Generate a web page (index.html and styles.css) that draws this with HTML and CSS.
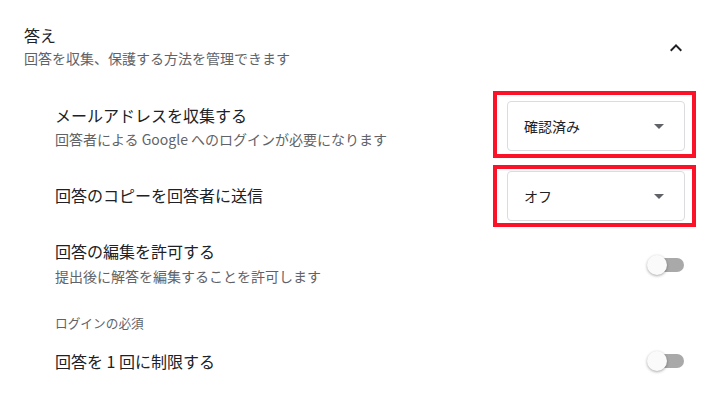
FILE: index.html
```html
<!DOCTYPE html>
<html lang="ja">
<head>
<meta charset="utf-8">
<link rel="stylesheet" href="styles.css">
</head>
<body>
<div class="page">
  <div class="header">
    <div class="header-text">
      <div class="h-title">答え</div>
      <div class="h-sub">回答を収集、保護する方法を管理できます</div>
    </div>
    <svg class="chev" width="24" height="24" viewBox="0 0 24 24"><path d="M12 8l-6 6 1.41 1.41L12 10.83l4.59 4.58L18 14z" fill="#202124"/></svg>
  </div>

  <div class="row row1">
    <div class="text">
      <div class="title">メールアドレスを収集する</div>
      <div class="sub">回答者による Google へのログインが必要になります</div>
    </div>
    <div class="select-wrap">
      <div class="select"><span>確認済み</span><span class="arrow"></span></div>
      <div class="mark mark1"></div>
    </div>
  </div>

  <div class="row row2">
    <div class="text">
      <div class="title">回答のコピーを回答者に送信</div>
    </div>
    <div class="select-wrap">
      <div class="select"><span>オフ</span><span class="arrow"></span></div>
      <div class="mark mark2"></div>
    </div>
  </div>

  <div class="row row3">
    <div class="text">
      <div class="title">回答の編集を許可する</div>
      <div class="sub">提出後に解答を編集することを許可します</div>
    </div>
    <div class="toggle"><div class="track"></div><div class="thumb"></div></div>
  </div>

  <div class="section-label">ログインの必須</div>

  <div class="row row5">
    <div class="text">
      <div class="title">回答を 1 回に制限する</div>
    </div>
    <div class="toggle"><div class="track"></div><div class="thumb"></div></div>
  </div>
</div>
</body>
</html>
```

FILE: styles.css
```css
* { box-sizing: border-box; }
html, body { margin: 0; padding: 0; background: #fff; }
body {
  font-family: "Noto Sans CJK JP", "Noto Sans", Roboto, sans-serif;
  color: #202124;
  width: 727px;
  height: 402px;
  overflow: hidden;
}
.page { padding-top: 23px; }
.header {
  display: flex;
  align-items: center;
  justify-content: space-between;
  padding: 0 39px 0 24px;
}
.h-title { font-size: 16px; line-height: 24px; color: #202124; }
.h-sub { font-size: 14px; line-height: 23px; color: #5f6368; }
.chev { display: block; margin-top: 2px; }

.row {
  display: flex;
  align-items: center;
  justify-content: space-between;
  padding: 0 42px 0 55px;
}
.title { font-size: 16px; line-height: 24px; color: #202124; }
.sub { font-size: 14px; line-height: 24px; color: #5f6368; }

.row1 { margin-top: 31px; }
.row1 .text { padding-top: 1px; }
.row2 { margin-top: 20px; }
.row2 .text { margin-top: -3px; }
.row3 { margin-top: 19px; }
.row3 .title { margin-top: -1px; }
.row3 .sub { line-height: 26px; }
.row5 { margin-top: 16px; }

.select-wrap { position: relative; }
.select {
  width: 178px;
  height: 50px;
  border: 1px solid #dadce0;
  border-radius: 4px;
  display: flex;
  align-items: center;
  justify-content: space-between;
  padding: 0 20px 0 16px;
  font-size: 14px;
  color: #202124;
}
.arrow {
  width: 0; height: 0;
  border-left: 5px solid transparent;
  border-right: 5px solid transparent;
  border-top: 5px solid #5f6368;
}
.mark {
  position: absolute;
  border: 4px solid #fc1228;
}
.mark1 { left: -14px; top: -10px; right: -11px; bottom: -7px; }
.mark2 { left: -14px; top: -6px; right: -11px; bottom: -6px; }

.section-label {
  font-size: 12.7px;
  line-height: 20px;
  color: #5f6368;
  padding-left: 55px;
  margin-top: 24px;
}

.toggle {
  position: relative;
  width: 37px;
  height: 20px;
  margin-right: 1px;
}
.track {
  position: absolute;
  left: 3px; right: 0; top: 3px;
  height: 14px;
  border-radius: 7px;
  background: #a9a9a9;
}
.thumb {
  position: absolute;
  left: 0; top: 0;
  width: 20px; height: 20px;
  border-radius: 50%;
  background: #fafafa;
  box-shadow: 0 1px 3px rgba(0,0,0,0.35);
}
```
